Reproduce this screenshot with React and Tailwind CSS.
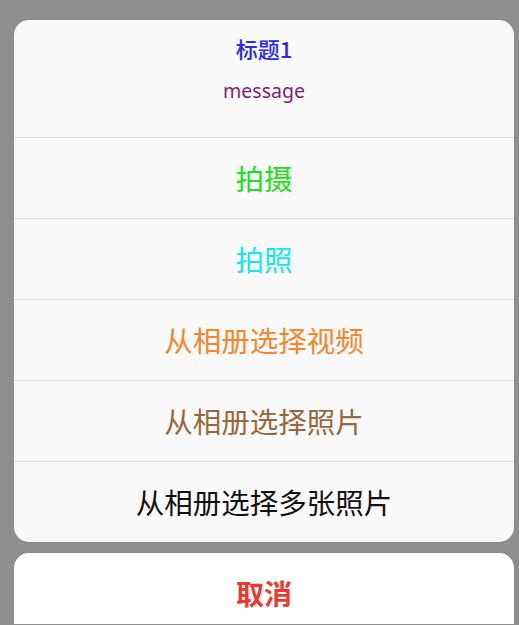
export default function App() {
  const rows = [
    { t: "拍摄", c: "text-[#1ee01e]" },
    { t: "拍照", c: "text-[#12e8f0]" },
    { t: "从相册选择视频", c: "text-[#f7862a]" },
    { t: "从相册选择照片", c: "text-[#98683c]" },
    { t: "从相册选择多张照片", c: "text-[#111111]" },
  ];
  return (
    <div
      className="h-[625px] w-[519px] overflow-hidden bg-[#8e8e8e] pt-[20px] pl-[14px] pr-[5px]"
      style={{ fontFamily: '"Noto Sans", "Noto Sans CJK SC", sans-serif' }}
    >
      <div className="overflow-hidden rounded-[15px] bg-[#f9f9f9]">
        <div className="flex h-[117px] flex-col items-center pt-[12px]">
          <div
            className="text-[22px] leading-[32px] font-medium text-[#2a2ae6]"
            style={{ fontFamily: '"Noto Sans CJK SC", sans-serif' }}
          >
            标题1
          </div>
          <div className="mt-[14px] text-[19.5px] leading-[26px] text-[#7d1f80]">message</div>
        </div>
        {rows.map((r) => (
          <div
            key={r.t}
            className="flex h-[81px] items-center justify-center border-t border-[#dedede]"
          >
            <span
              className={`text-[28.5px] leading-[38px] ${r.c}`}
              style={{ fontFamily: '"Noto Sans CJK SC", sans-serif' }}
            >
              {r.t}
            </span>
          </div>
        ))}
      </div>
      <div className="mt-[11px] flex h-[71px] items-center justify-center rounded-t-[15px] bg-white pt-[9px]">
        <span
          className="text-[28px] leading-[38px] font-bold text-[#f0362e]"
          style={{ fontFamily: '"Noto Sans CJK SC", sans-serif' }}
        >
          取消
        </span>
      </div>
    </div>
  );
}
